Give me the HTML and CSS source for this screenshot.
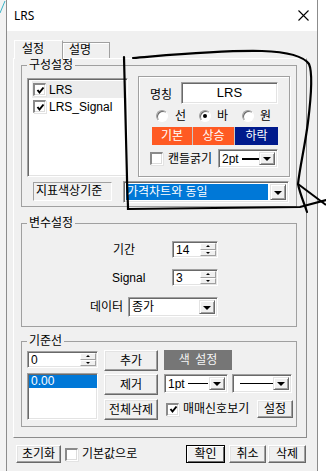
FILE: index.html
```html
<!DOCTYPE html>
<html lang="ko">
<head>
<meta charset="UTF-8">
<meta name="viewport" content="width=device-width, initial-scale=1.0">
<title>LRS</title>
<link rel="stylesheet" href="styles.css">
</head>
<body>
<div class="screen">
    <div class="dialog">
        <div class="titlebar">
            <span class="title">LRS</span>
            <svg class="close" width="11" height="11" viewBox="0 0 11 11"><path d="M0.5 0.5 L10.5 10.5 M10.5 0.5 L0.5 10.5" stroke="#000" stroke-width="1.1" fill="none"/></svg>
        </div>
        <div class="client">
            <div class="tabs">
                <div class="tab active">설정</div>
                <div class="tab">설명</div>
            </div>
            <div class="panel">
                <!-- 구성설정 -->
                <fieldset class="group group-config">
                    <legend>구성설정</legend>
                    <div class="config-top">
                        <div class="listbox sunken">
                            <div class="item hover"><span class="check on"><svg width="9" height="9" viewBox="0 0 9 9"><path d="M1.5 4 L3.5 6.5 L7.5 1.5" stroke="#000" stroke-width="2" fill="none"/></svg></span>LRS</div>
                            <div class="item"><span class="check on"><svg width="9" height="9" viewBox="0 0 9 9"><path d="M1.5 4 L3.5 6.5 L7.5 1.5" stroke="#000" stroke-width="2" fill="none"/></svg></span>LRS_Signal</div>
                        </div>
                        <div class="style-box">
                            <div class="name-row">
                                <span class="name-label">명칭</span>
                                <div class="edit sunken">LRS</div>
                            </div>
                            <div class="radio-row">
                                <span class="radio r1"></span><span class="radio-text">선</span>
                                <span class="radio r2 on"></span><span class="radio-text">바</span>
                                <span class="radio r3"></span><span class="radio-text">원</span>
                            </div>
                            <div class="color-bar">
                                <span class="swatch orange s1">기본</span>
                                <span class="swatch orange s2">상승</span>
                                <span class="swatch navy s3">하락</span>
                            </div>
                            <div class="candle-row">
                                <span class="check"></span>
                                <span class="candle-text">캔들굵기</span>
                                <div class="combo sunken combo-candle">
                                    <span class="combo-value">2pt<i class="line thick"></i></span>
                                    <span class="drop"></span>
                                </div>
                            </div>
                        </div>
                    </div>
                    <div class="config-bottom">
                        <div class="static">지표색상기준</div>
                        <div class="combo sunken combo-base">
                            <span class="combo-value selected">가격차트와 동일</span>
                            <span class="drop"></span>
                        </div>
                    </div>
                </fieldset>

                <!-- 변수설정 -->
                <fieldset class="group group-vars">
                    <legend>변수설정</legend>
                    <div class="var-row row-period">
                        <span class="var-label">기간</span>
                        <div class="spin sunken"><span class="spin-value">14</span><span class="spin-btns"><b class="up"></b><b class="down"></b></span></div>
                    </div>
                    <div class="var-row row-signal">
                        <span class="var-label">Signal</span>
                        <div class="spin sunken"><span class="spin-value">3</span><span class="spin-btns"><b class="up"></b><b class="down"></b></span></div>
                    </div>
                    <div class="var-row row-data">
                        <span class="var-label">데이터</span>
                        <div class="combo sunken combo-data">
                            <span class="combo-value">종가</span>
                            <span class="drop"></span>
                        </div>
                    </div>
                </fieldset>

                <!-- 기준선 -->
                <fieldset class="group group-base">
                    <legend>기준선</legend>
                    <div class="base-wrap">
                        <div class="base-left">
                            <div class="spin sunken spin-base"><span class="spin-value">0</span><span class="spin-btns"><b class="up"></b><b class="down"></b></span></div>
                            <div class="listbox sunken base-list">
                                <div class="base-item">0.00</div>
                            </div>
                        </div>
                        <div class="base-mid">
                            <div class="btn">추가</div>
                            <div class="btn">제거</div>
                            <div class="btn">전체삭제</div>
                        </div>
                        <div class="base-right">
                            <div class="color-btn">색 설정</div>
                            <div class="line-row">
                                <div class="combo sunken combo-width">
                                    <span class="combo-value">1pt<i class="line"></i></span>
                                    <span class="drop"></span>
                                </div>
                                <div class="combo sunken combo-style">
                                    <span class="combo-value"><i class="line long"></i></span>
                                    <span class="drop"></span>
                                </div>
                            </div>
                            <div class="signal-row">
                                <span class="check on"><svg width="9" height="9" viewBox="0 0 9 9"><path d="M1.5 4 L3.5 6.5 L7.5 1.5" stroke="#000" stroke-width="2" fill="none"/></svg></span>
                                <span class="signal-text">매매신호보기</span>
                                <div class="btn btn-small">설정</div>
                            </div>
                        </div>
                    </div>
                </fieldset>
            </div>

            <div class="footer">
                <div class="btn btn-reset">초기화</div>
                <span class="check"></span>
                <span class="footer-text">기본값으로</span>
                <div class="btn btn-ok">확인</div>
                <div class="btn btn-cancel">취소</div>
                <div class="btn btn-delete">삭제</div>
            </div>
        </div>
    </div>

    <!-- hand drawn marks over the screenshot -->
    <svg class="marker" width="326" height="471" viewBox="0 0 326 471">
        <path d="M0 13 L5 1" stroke="#3cb4c8" stroke-width="1" fill="none"/>
        <path d="M124 57 C125 95 126 140 127 178 C127 192 128 200 128 209 L300 207 L326 200" stroke="#000" stroke-width="2.2" fill="none" stroke-linecap="round"/>
        <path d="M133 58 C170 55 220 50 262 51 C290 52 304 57 309 64 C313 73 311 98 308 122 C305 146 300 166 298 184 C300 194 304 203 307 212" stroke="#000" stroke-width="2.2" fill="none" stroke-linecap="round"/>
        <path d="M298 184 L326 205" stroke="#000" stroke-width="2" fill="none"/>
    </svg>
</div>
</body>
</html>
```

FILE: styles.css
```css
* {
    box-sizing: border-box;
}

body {
    margin: 0;
    width: 326px;
    height: 471px;
    overflow: hidden;
    background: #fff;
    font-family: "Liberation Sans", "Noto Sans CJK KR", sans-serif;
    font-size: 12px;
    color: #000;
}

.screen {
    position: relative;
    height: 471px;
    padding-left: 6px;
    background: linear-gradient(to right, #f3f3f3 0, #f3f3f3 6px, #fff 6px);
}

.dialog {
    width: 312px;
    height: 480px;
    border-left: 1px solid #8c8c8c;
    border-right: 1px solid #8c8c8c;
    background: #f0f0f0;
}

/* title bar */
.titlebar {
    height: 31px;
    background: #fff;
    display: flex;
    align-items: center;
    padding: 0 8px 0 7px;
}

.title {
    flex: 1;
    font-family: "Noto Sans", "Liberation Sans", sans-serif;
    font-size: 12px;
}

.close {
    display: block;
}

/* common 3d look */
.sunken {
    background: #fff;
    border-top: 1px solid #a0a0a0;
    border-left: 1px solid #a0a0a0;
    border-right: 1px solid #fff;
    border-bottom: 1px solid #fff;
    box-shadow: inset 1px 1px 0 #696969, inset -1px -1px 0 #e3e3e3;
}

.btn {
    display: flex;
    align-items: center;
    justify-content: center;
    background: #f0f0f0;
    border-top: 1px solid #fff;
    border-left: 1px solid #fff;
    border-right: 1px solid #696969;
    border-bottom: 1px solid #696969;
    box-shadow: inset -1px -1px 0 #a0a0a0, inset 1px 1px 0 #e3e3e3;
    line-height: 12px;
}

.check {
    display: inline-flex;
    align-items: center;
    justify-content: center;
    width: 13px;
    height: 13px;
    flex: none;
    background: #fff;
    border-top: 2px solid #8a8a8a;
    border-left: 2px solid #8a8a8a;
    border-right: 1px solid #fff;
    border-bottom: 1px solid #fff;
    box-shadow: 1px 1px 0 #e3e3e3, inset -1px -1px 0 #dcdcdc;
}

.check svg {
    display: block;
}

.drop {
    position: relative;
    width: 16px;
    flex: none;
    background: #f0f0f0;
    border-top: 1px solid #e3e3e3;
    border-left: 1px solid #e3e3e3;
    border-right: 1px solid #696969;
    border-bottom: 1px solid #696969;
    box-shadow: inset 1px 1px 0 #fff, inset -1px -1px 0 #a0a0a0;
    display: flex;
    align-items: center;
    justify-content: center;
}

.drop::after {
    content: "";
    border-top: 4px solid #000;
    border-left: 4px solid transparent;
    border-right: 4px solid transparent;
    margin-top: 1px;
}

/* tabs */
.client {
    padding-top: 9px;
}

.tabs {
    display: flex;
    height: 18px;
    margin-left: 7px;
    align-items: flex-start;
}

.tab {
    height: 16px;
    margin-top: 2px;
    width: 47px;
    padding-left: 6px;
    line-height: 15px;
    border: 1px solid #a0a0a0;
    border-bottom: none;
    border-left: none;
    box-shadow: inset 1px 1px 0 #fff;
    background: #f0f0f0;
}

.tab.active {
    position: relative;
    z-index: 1;
    width: 49px;
    height: 19px;
    margin-top: 0;
    padding-left: 7px;
    line-height: 17px;
    border-left: 1px solid #fff;
    border-top: 1px solid #fff;
    box-shadow: none;
}

.panel {
    margin-left: 6px;
    width: 294px;
    height: 380px;
    border-top: 1px solid #fff;
    border-left: 1px solid #fff;
    border-right: 1px solid #8c8c8c;
    border-bottom: 1px solid #8c8c8c;
    padding-left: 7px;
}

/* group boxes */
.group {
    margin: 0;
    width: 276px;
    padding: 0 0 0 5px;
    border: 1px solid #a0a0a0;
    min-width: 0;
}

.group legend {
    padding: 0 2px;
    margin-left: 0;
    line-height: 12px;
    height: 12px;
}

.group-config {
    height: 148px;
}

.group-vars {
    margin-top: 10px;
    height: 110px;
}

.group-base {
    margin-top: 8px;
    height: 92px;
}

/* 구성설정 */
.config-top {
    display: flex;
    align-items: flex-start;
    margin-top: 5px;
}

.listbox {
    width: 101px;
    height: 99px;
    margin-top: 2px;
    padding: 2px 0 0 4px;
}

.item {
    display: flex;
    align-items: center;
    height: 17px;
    padding-left: 1px;
    line-height: 12px;
}

.item.hover {
    background: #ececec;
}

.item .check {
    margin-right: 3px;
}

.style-box {
    width: 152px;
    height: 101px;
    margin-left: 10px;
    border: 1px solid #a0a0a0;
    box-shadow: inset 1px 1px 0 #fff, 1px 1px 0 #fff;
    padding: 5px 0 0 11px;
}

.name-row {
    display: flex;
    align-items: center;
    height: 22px;
}

.name-label {
    width: 24px;
    margin-right: 7px;
}

.edit {
    width: 97px;
    height: 22px;
    text-align: center;
    line-height: 19px;
    font-size: 13px;
}

.radio-row {
    display: flex;
    align-items: center;
    height: 12px;
    margin-top: 6px;
    line-height: 12px;
}

.radio {
    width: 12px;
    height: 12px;
    border-radius: 50%;
    background: #fff;
    border: 1px solid;
    border-color: #a0a0a0 #fff #fff #a0a0a0;
    box-shadow: inset 1px 1px 0 #696969;
    display: flex;
    align-items: center;
    justify-content: center;
}

.radio.on::after {
    content: "";
    width: 4px;
    height: 4px;
    border-radius: 50%;
    background: #000;
}

.r1 {
    margin-left: 6px;
}

.r2 {
    margin-left: 13px;
}

.r3 {
    margin-left: 14px;
}

.radio-text {
    margin-left: 7px;
}

.r2 + .radio-text,
.r3 + .radio-text {
    margin-left: 6px;
}

.color-bar {
    display: flex;
    height: 18px;
    width: 126px;
    margin: 5px 0 0 2px;
}

.swatch {
    display: flex;
    align-items: center;
    justify-content: center;
    color: #fff;
    line-height: 12px;
}

.orange {
    background: #ff5a23;
}

.navy {
    background: #001a8c;
}

.s1 {
    width: 41px;
    border-right: 1px solid #c8c8c8;
}

.s2 {
    width: 42px;
    border-right: 1px solid #c8c8c8;
}

.s3 {
    width: 43px;
}

.candle-row {
    display: flex;
    align-items: center;
    height: 19px;
    margin-top: 4px;
    line-height: 12px;
}

.candle-text {
    margin-left: 5px;
    width: 48px;
}

.combo {
    display: flex;
    padding: 2px 2px 2px 2px;
    line-height: 12px;
}

.combo-value {
    flex: 1;
    display: flex;
    align-items: center;
    padding-left: 1px;
    white-space: nowrap;
    overflow: hidden;
}

.combo-candle {
    width: 60px;
    height: 19px;
    margin-left: 2px;
}

.line {
    display: inline-block;
    width: 20px;
    border-top: 1px solid #000;
    margin-left: 3px;
}

.line.thick {
    border-top-width: 2px;
}

.line.long {
    width: 38px;
    margin-left: 4px;
}

.config-bottom {
    display: flex;
    align-items: flex-start;
    margin-top: 4px;
}

.static {
    width: 79px;
    height: 19px;
    margin: 1px 0 0 6px;
    padding-left: 2px;
    line-height: 17px;
    border-top: 1px solid #a0a0a0;
    border-left: 1px solid #a0a0a0;
    border-right: 1px solid #fff;
    border-bottom: 1px solid #fff;
}

.combo-base {
    width: 166px;
    height: 22px;
    margin-left: 11px;
}

.combo-value.selected {
    background: #0078d7;
    color: #fff;
    margin-right: 2px;
}

/* 변수설정 */
.var-row {
    display: flex;
    align-items: center;
    line-height: 12px;
}

.var-label {
    width: 145px;
}

.row-period {
    margin-top: 12px;
    height: 17px;
}

.row-period .var-label {
    padding-left: 86px;
}

.row-signal {
    margin-top: 11px;
    height: 17px;
}

.row-signal .var-label {
    padding-left: 85px;
}

.row-data {
    margin-top: 11px;
    height: 20px;
}

.row-data .var-label {
    width: 101px;
    padding-left: 63px;
}

.spin {
    display: flex;
    width: 46px;
    height: 17px;
    padding: 1px 1px 1px 1px;
    line-height: 12px;
}

.spin-value {
    flex: 1;
    padding-left: 2px;
    display: flex;
    align-items: center;
}

.spin-btns {
    width: 16px;
    display: flex;
    flex-direction: column;
}

.spin-btns b {
    flex: 1;
    background: #f0f0f0;
    border-top: 1px solid #fff;
    border-left: 1px solid #fff;
    border-right: 1px solid #a0a0a0;
    border-bottom: 1px solid #a0a0a0;
    display: flex;
    align-items: center;
    justify-content: center;
}

.spin-btns b::after {
    content: "";
    border-left: 2px solid transparent;
    border-right: 2px solid transparent;
}

.spin-btns .up::after {
    border-bottom: 2px solid #000;
}

.spin-btns .down::after {
    border-top: 2px solid #000;
}

.combo-data {
    width: 90px;
    height: 20px;
}

/* 기준선 */
.base-wrap {
    display: flex;
    align-items: flex-start;
    margin-top: 3px;
}

.base-left {
    width: 71px;
}

.spin-base {
    width: 71px;
    margin-top: 1px;
}

.base-list {
    width: 71px;
    height: 47px;
    margin-top: 5px;
    padding: 1px 0 0 1px;
}

.base-item {
    height: 13px;
    background: #0078d7;
    color: #fff;
    line-height: 13px;
    padding-left: 2px;
}

.base-mid {
    width: 54px;
    margin-left: 6px;
}

.base-mid .btn {
    height: 21px;
}

.base-mid .btn + .btn {
    margin-top: 3px;
}

.base-mid .btn:last-child {
    margin-top: 4px;
}

.base-right {
    width: 129px;
    margin-left: 6px;
}

.color-btn {
    width: 68px;
    height: 20px;
    background: #767676;
    color: #f4f4f4;
    display: flex;
    align-items: center;
    justify-content: center;
    word-spacing: 2px;
    line-height: 12px;
}

.line-row {
    display: flex;
    margin-top: 4px;
}

.combo-width {
    width: 64px;
    height: 19px;
}

.combo-style {
    width: 60px;
    height: 19px;
    margin-left: 4px;
}

.signal-row {
    display: flex;
    align-items: center;
    margin-top: 7px;
    height: 18px;
    line-height: 12px;
}

.signal-row .check {
    margin-left: 2px;
}

.signal-text {
    margin-left: 4px;
    width: 72px;
}

.btn-small {
    width: 36px;
    height: 18px;
    margin-left: 2px;
}

/* footer */
.footer {
    display: flex;
    align-items: center;
    height: 18px;
    margin-top: 7px;
    line-height: 12px;
}

.footer .btn {
    height: 18px;
}

.btn-reset {
    width: 45px;
    margin-left: 9px;
}

.footer .check {
    margin-left: 4px;
}

.footer-text {
    margin-left: 4px;
    width: 60px;
}

.btn-ok {
    width: 39px;
    margin-left: 44px;
    border: 1px solid #000;
    box-shadow: inset 1px 1px 0 #fff, inset -1px -1px 0 #696969;
}

.btn-cancel {
    width: 37px;
    margin-left: 4px;
}

.btn-delete {
    width: 38px;
    margin-left: 2px;
}

/* annotation drawn over the dialog */
.marker {
    position: absolute;
    top: 0;
    left: 0;
    pointer-events: none;
}
```
